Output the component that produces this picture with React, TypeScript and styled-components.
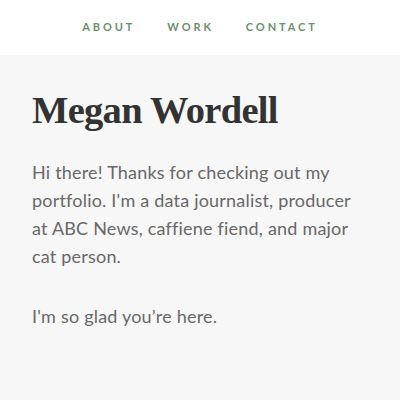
import React from "react";
import styled, { createGlobalStyle } from "styled-components";

const Global = createGlobalStyle`
  html, body { margin: 0; padding: 0; background: #f7f7f7; }
  body { font-family: Lato, "Open Sans", sans-serif; }
`;

const Header = styled.header`
  height: 55px;
  background: #ffffff;
  display: flex;
  justify-content: center;
  align-items: center;
`;

const Nav = styled.nav`
  display: flex;
  gap: 32px;
  margin-top: -2px;
`;

const NavLink = styled.a`
  font-family: Lato, sans-serif;
  font-weight: 700;
  font-size: 11px;
  letter-spacing: 2.9px;
  color: #6b8f6b;
  text-decoration: none;
  text-transform: uppercase;
`;

const Main = styled.main`
  padding: 34px 32px 0 32px;
`;

const Title = styled.h1`
  margin: 0;
  font-family: "Liberation Serif", "DejaVu Serif", serif;
  font-weight: 700;
  font-size: 38.5px;
  letter-spacing: -0.7px;
  color: #333333;
  line-height: 42px;
`;

const Body = styled.div`
  margin-top: 27px;
  width: 336px;
`;

const Para = styled.p`
  margin: 0;
  font-family: Lato, sans-serif;
  font-size: 18px;
  letter-spacing: 0.2px;
  line-height: 28px;
  color: #686868;
  & + & { margin-top: 32px; }
`;

export default function App() {
  return (
    <>
      <Global />
      <Header>
        <Nav>
          <NavLink href="#">About</NavLink>
          <NavLink href="#">Work</NavLink>
          <NavLink href="#">Contact</NavLink>
        </Nav>
      </Header>
      <Main>
        <Title>Megan Wordell</Title>
        <Body>
          <Para>
            Hi there! Thanks for checking out my portfolio. I'm a data journalist, producer at ABC News, caffiene fiend, and major cat person.
          </Para>
          <Para>I'm so glad you’re here.</Para>
        </Body>
      </Main>
    </>
  );
}
